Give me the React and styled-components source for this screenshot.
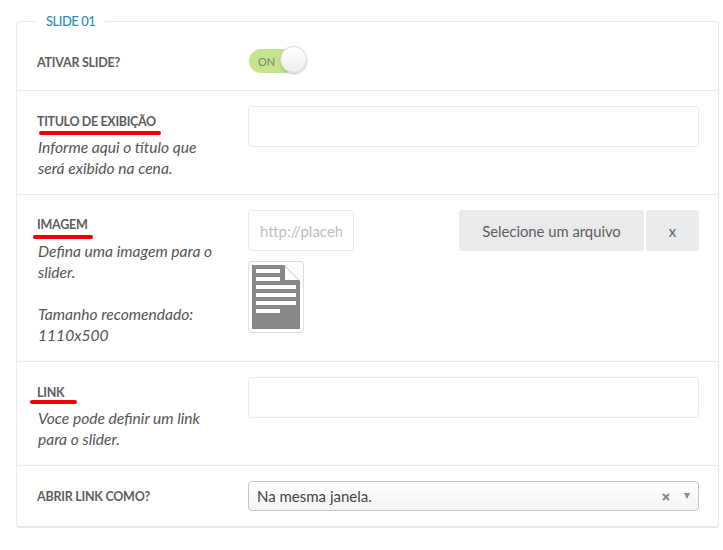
import React from 'react';
import styled, { createGlobalStyle } from 'styled-components';

const Global = createGlobalStyle`
body{
  margin:0;
  background:#fff;
  font-family:Lato, "Liberation Sans", sans-serif;
}
`;

const Page = styled.div`
width:723px;
height:550px;
padding:14px 4px 0 16px;
box-sizing:border-box;
overflow:hidden;
`;

const Card = styled.fieldset`
margin:0;
padding:0;
min-width:0;
border:1px solid #ebebeb;
border-bottom:2px solid #e8e8e8;
border-radius:4px;
`;

const Legend = styled.legend`
margin-left:19px;
padding:0 10px;
font-size:13px;
line-height:14px;
font-weight:500;
letter-spacing:-0.5px;
color:#2b8cb8;
`;

const Row = styled.div`
display:grid;
grid-template-columns:211px 451px;
box-sizing:border-box;
height:${props => props.$height}px;
padding:${props => props.$padding || '15px 20px'};
align-items:${props => props.$center ? 'center' : 'start'};
border-bottom:${props => props.$last ? 'none' : '1px solid #ebebeb'};
`;

const LabelCol = styled.div`
position:relative;
`;

const Label = styled.div`
font-size:12.5px;
line-height:18px;
font-weight:700;
letter-spacing:${props => props.$tight ? '-0.35px' : '-0.25px'};
color:#5e5e5e;
padding-top:${props => props.$top || 0}px;
`;

const Help = styled.div`
font-size:15.6px;
line-height:21px;
font-style:italic;
color:#555;
margin-top:${props => props.$gap || 6}px;
padding-left:1px;
`;

const Mark = styled.div`
position:absolute;
left:${props => props.$left}px;
top:${props => props.$top}px;
width:${props => props.$width}px;
height:4px;
border-radius:2px;
background:#f00000;
`;

const Track = styled.div`
position:relative;
width:47px;
height:24px;
margin-left:1px;
border-radius:12px;
background:#c4e58e;
display:flex;
align-items:center;
`;

const OnText = styled.span`
font-size:11px;
font-weight:500;
color:#7b8c6b;
padding-left:9px;
`;

const Knob = styled.div`
position:absolute;
left:31px;
top:-3px;
width:25px;
height:25px;
border-radius:50%;
border:1px solid #d8d8d8;
background:linear-gradient(#fff, #ececec);
box-shadow:0 1px 2px rgba(0,0,0,0.25);
`;

const TextInput = styled.input`
display:block;
width:${props => props.$width || '100%'};
height:41px;
box-sizing:border-box;
border:1px solid #ebebeb;
border-radius:3px;
padding:0 11px;
font-family:inherit;
font-size:15px;
background:#fff;
color:#555;
outline:none;
&::placeholder{
  color:#bdbdbd;
  opacity:1;
}
`;

const FileRow = styled.div`
display:flex;
align-items:flex-start;
`;

const Btn = styled.button`
height:41px;
width:${props => props.$width}px;
margin-left:${props => props.$offset || 0}px;
border:none;
border-radius:3px;
background:#e9eaec;
color:#5e5e5e;
font-family:inherit;
font-size:14.8px;
padding:0;
`;

const Thumb = styled.div`
width:56px;
height:72px;
box-sizing:border-box;
margin-top:10px;
border:1px solid #ddd;
border-radius:3px;
padding:3px;
`;

const SelectBox = styled.div`
display:flex;
align-items:center;
height:30px;
box-sizing:border-box;
border:1px solid #c4c4c4;
border-radius:4px;
padding:0 8px;
background:linear-gradient(#fff, #f3f3f3);
font-size:15px;
color:#444;
`;

const SelectText = styled.span`
flex:1;
`;

const Clear = styled.span`
display:flex;
margin-right:14px;
margin-top:2px;
`;

const Arrow = styled.span`
width:0;
height:0;
border-left:3.5px solid transparent;
border-right:3.5px solid transparent;
border-top:6px solid #888;
`;

const DocIcon = () => (
    <svg width="48" height="64" viewBox="0 0 48 64" style={{ display: 'block' }}>
        <path d="M0 0H32L48 16V64H0Z" fill="#888" />
        <path d="M33 1.5L46.5 15H33Z" fill="#fff" />
        <path d="M4 4H28V8H4ZM4 12H28V16H4ZM4 20H44V24H4ZM4 28H44V32H4ZM4 36H44V40H4ZM4 44H28V48H4Z" fill="#fff" />
    </svg>
);

const ClearIcon = () => (
    <svg width="8" height="8" viewBox="0 0 8 8" style={{ display: 'block' }}>
        <path d="M1 1L7 7M7 1L1 7" stroke="#888" strokeWidth="2" />
    </svg>
);

const App = () => {
    return (
        <Page>
            <Global />
            <Card>
                <Legend>SLIDE 01</Legend>

                <Row $center $height={63} $padding="4px 20px 0">
                    <Label $top={3}>ATIVAR SLIDE?</Label>
                    <Track>
                        <OnText>ON</OnText>
                        <Knob />
                    </Track>
                </Row>

                <Row $height={104}>
                    <LabelCol>
                        <Label $top={7} $tight>TITULO DE EXIBIÇÃO</Label>
                        <Mark $left={2} $top={25} $width={122} />
                        <Help>Informe aqui o título que<br />será exibido na cena.</Help>
                    </LabelCol>
                    <TextInput />
                </Row>

                <Row $height={167}>
                    <LabelCol>
                        <Label $top={6}>IMAGEM</Label>
                        <Mark $left={-4} $top={25} $width={60} />
                        <Help $gap={7}>Defina uma imagem para o<br />slider.<br /><br />Tamanho recomendado:<br />1110x500</Help>
                    </LabelCol>
                    <div>
                        <FileRow>
                            <TextInput $width="106px" placeholder="http://placehold.it/50x50" />
                            <Btn $width={185} $offset={105}>Selecione um arquivo</Btn>
                            <Btn $width={53} $offset={2}>x</Btn>
                        </FileRow>
                        <Thumb><DocIcon /></Thumb>
                    </div>
                </Row>

                <Row $height={104}>
                    <LabelCol>
                        <Label $top={7}>LINK</Label>
                        <Mark $left={-7} $top={23} $width={47} />
                        <Help>Voce pode definir um link<br />para o slider.</Help>
                    </LabelCol>
                    <TextInput />
                </Row>

                <Row $center $last $height={60}>
                    <Label $top={2}>ABRIR LINK COMO?</Label>
                    <SelectBox>
                        <SelectText>Na mesma janela.</SelectText>
                        <Clear><ClearIcon /></Clear>
                        <Arrow />
                    </SelectBox>
                </Row>
            </Card>
        </Page>
    );
};

export default App;
